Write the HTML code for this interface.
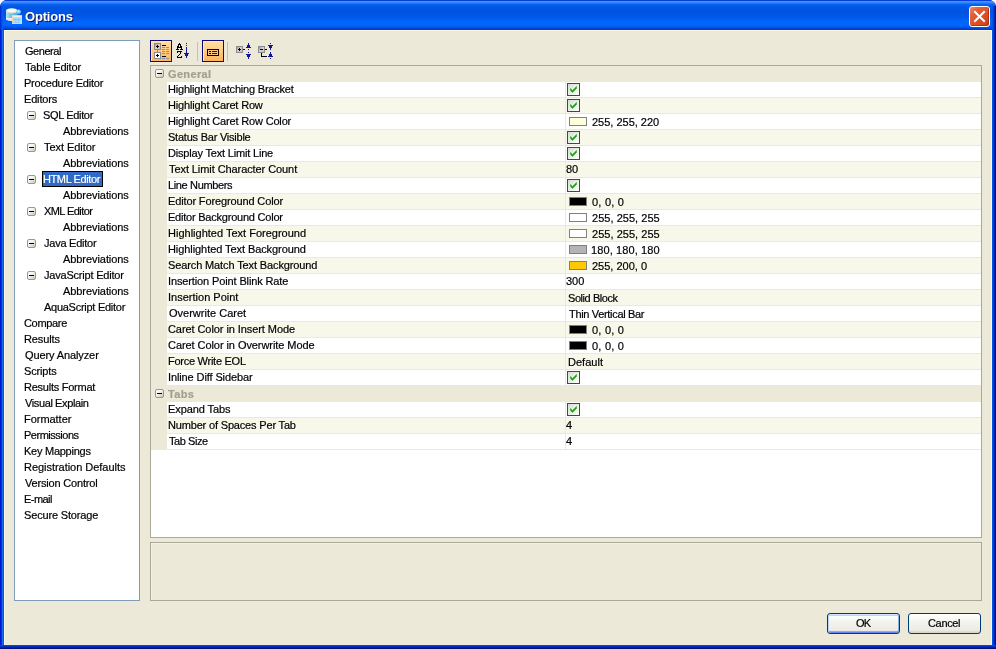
<!DOCTYPE html><html><head><meta charset="utf-8"><title>Options</title><style>
*{margin:0;padding:0;box-sizing:border-box}
html,body{width:996px;height:649px;overflow:hidden;background:#fff}
body{position:relative;font-family:'Liberation Sans', sans-serif;font-size:11px;color:#000}
.a{position:absolute}
.t{position:absolute;line-height:16px;white-space:nowrap;letter-spacing:-0.2px;will-change:transform;-webkit-text-stroke:0.2px currentColor}
.exp{position:absolute;width:9px;height:9px;border:1px solid #7F9DB9;border-radius:2px;background:linear-gradient(135deg,#fff 0%,#F4F2EA 45%,#C9C2AE 100%)}
.exp i{position:absolute;left:1px;top:3px;width:5px;height:1px;background:#000}
.cb{position:absolute;width:13px;height:13px;border:1px solid #1C5180;background:linear-gradient(135deg,#DCDCD7 0%,#F0F0EA 60%,#fff 100%)}
.cb svg{position:absolute;left:0;top:0}
.sw{position:absolute;width:18px;height:9px;border:1px solid #808080}
</style></head><body>
<div class="a" id="frame" style="left:0;top:0;width:996px;height:649px;background:#0831D9;border-radius:7px 7px 0 0"></div>
<div class="a" style="left:0;top:0;width:996px;height:30px;border-radius:7px 7px 0 0;background:linear-gradient(to bottom,#0A3ED8 0px,#0A3ED8 1px,#3D93FF 1px,#3D93FF 2px,#3389FF 2px,#3389FF 3px,#1874F8 3px,#1874F8 4px,#0A65F0 4px,#0A65F0 5px,#035CEA 5px,#035CEA 6px,#0058E7 6px,#0058E7 7px,#0056E5 7px,#0056E5 8px,#0055E4 8px,#0055E4 9px,#0054E3 9px,#0054E3 10px,#0054E3 10px,#0054E3 11px,#0054E3 11px,#0054E3 12px,#0054E3 12px,#0054E3 13px,#0054E3 13px,#0054E3 14px,#0055E5 14px,#0055E5 15px,#0056E7 15px,#0056E7 16px,#0058EA 16px,#0058EA 17px,#005AED 17px,#005AED 18px,#005DF0 18px,#005DF0 19px,#0060F4 19px,#0060F4 20px,#0063F7 20px,#0063F7 21px,#0065FA 21px,#0065FA 22px,#0066FC 22px,#0066FC 23px,#0066FD 23px,#0066FD 24px,#0066FE 24px,#0066FE 25px,#0064FA 25px,#0064FA 26px,#005CF0 26px,#005CF0 27px,#0052E4 27px,#0052E4 28px,#0046DA 28px,#0046DA 29px,#003ACC 29px,#003ACC 30px)"></div>
<div class="a" style="left:0;top:6px;width:3px;height:24px;background:linear-gradient(to right,#0030D4 0,#0030D4 1px,#0848E6 1px,#0848E6 2px,#0A58F0 2px)"></div>
<div class="a" style="left:992px;top:6px;width:4px;height:24px;background:linear-gradient(to right,#0050EC 0,#0050EC 1px,#0040D4 1px,#0040D4 2px,#0028B0 2px,#0028B0 3px,#001890 3px)"></div>
<div class="a" style="left:0;top:30px;width:4px;height:619px;background:linear-gradient(to right,#0019CF 0,#0019CF 1px,#0035E0 1px,#0035E0 2px,#166CF0 2px,#166CF0 3px,#0852E6 3px)"></div>
<div class="a" style="left:992px;top:30px;width:4px;height:619px;background:linear-gradient(to right,#0050F0 0,#0050F0 1px,#0040D8 1px,#0040D8 2px,#0022A8 2px,#0022A8 3px,#001284 3px)"></div>
<div class="a" style="left:0;top:645px;width:996px;height:4px;background:linear-gradient(to bottom,#0048E0 0,#0048E0 1px,#0030C0 1px,#0030C0 2px,#0020A0 2px,#0020A0 3px,#001080 3px)"></div>
<div class="a" style="left:4px;top:30px;width:988px;height:615px;background:#ECE9D8;border-top:1px solid #FFF8E4;border-left:1px solid #FFF8E4;border-right:1px solid #FFF8E4"></div>
<svg class="a" style="left:4px;top:6px" width="20" height="20" viewBox="0 0 20 20">
<defs><linearGradient id="cyl" x1="0" x2="1"><stop offset="0" stop-color="#B8E4FA"/><stop offset="0.4" stop-color="#6CC8F2"/><stop offset="1" stop-color="#48B0E8"/></linearGradient>
<radialGradient id="ball" cx="0.4" cy="0.35" r="0.7"><stop offset="0" stop-color="#D8F2FF"/><stop offset="0.6" stop-color="#70BEEE"/><stop offset="1" stop-color="#3A8ED8"/></radialGradient></defs>
<path d="M2 4.5 Q7.8 1.5 13.6 4.5 L13.6 13.5 Q7.8 16 2 13.5 Z" fill="url(#cyl)"/>
<path d="M2 12 L13.6 12 L13.6 13.8 Q7.8 16.2 2 13.8 Z" fill="#F2EADC"/>
<ellipse cx="7.8" cy="4.6" rx="5.8" ry="2.4" fill="#FBF8F2"/>
<path d="M2 4.6 Q7.8 8.6 13.6 4.6 L13.6 5.8 Q7.8 9.2 2 5.8 Z" fill="#E8DCC8"/>
<circle cx="14.7" cy="6" r="2.4" fill="url(#ball)"/>
<rect x="8" y="9" width="10" height="9" fill="#E4D8C0"/>
<rect x="9" y="10" width="8" height="7" fill="#A4DAF6"/>
<rect x="9" y="10" width="8" height="1.3" fill="#F4F0E8"/>
<path d="M9 13.5 H17 M11.8 11.3 V17 M14.5 11.3 V17" stroke="#7CC0EC" stroke-width="0.7"/>
<path d="M9.2 12.2 H17 M9.2 15.2 H17" stroke="#C4ECFF" stroke-width="0.6"/>
</svg>
<div class="a" style="left:25px;top:7px;font:bold 13px 'Liberation Sans', sans-serif;color:#fff;line-height:20px;text-shadow:1px 1px 0 #0A1864;letter-spacing:-0.2px;will-change:transform">Options</div>
<div class="a" style="left:969px;top:6px;width:21px;height:21px;border:1px solid #fff;border-radius:3px;background:linear-gradient(135deg,#EE8A68 0%,#E4603A 25%,#DE5226 55%,#D44418 85%,#C43A10 100%);box-shadow:inset -1px -1px 0 #B8300C">
<svg class="a" style="left:0;top:0" width="19" height="19" viewBox="0 0 19 19"><path d="M5 5 L14 14 M14 5 L5 14" stroke="#fff" stroke-width="2" stroke-linecap="square"/></svg></div>
<div class="a" style="left:14px;top:40px;width:126px;height:561px;background:#fff;border:1px solid #7F9DB9"></div>
<div class="t" style="left:25px;top:43px;letter-spacing:-0.45px">General</div>
<div class="t" style="left:25px;top:59px;letter-spacing:-0.182px">Table Editor</div>
<div class="t" style="left:24px;top:75px;letter-spacing:-0.213px">Procedure Editor</div>
<div class="t" style="left:24px;top:91px;letter-spacing:-0.167px">Editors</div>
<div class="exp" style="left:27px;top:111px"><i></i></div>
<div class="t" style="left:43px;top:107px;letter-spacing:-0.344px">SQL Editor</div>
<div class="t" style="left:63px;top:123px;letter-spacing:-0.067px">Abbreviations</div>
<div class="exp" style="left:27px;top:143px"><i></i></div>
<div class="t" style="left:44px;top:139px;letter-spacing:-0.06px">Text Editor</div>
<div class="t" style="left:63px;top:155px;letter-spacing:-0.067px">Abbreviations</div>
<div class="exp" style="left:27px;top:175px"><i></i></div>
<div class="a" style="left:42px;top:171px;width:61px;height:16px;background:#316AC5;border:1px solid #000"></div>
<div class="t" style="left:43px;top:171px;color:#fff;letter-spacing:-0.4px">HTML Editor</div>
<div class="t" style="left:63px;top:187px;letter-spacing:-0.067px">Abbreviations</div>
<div class="exp" style="left:27px;top:207px"><i></i></div>
<div class="t" style="left:44px;top:203px;letter-spacing:-0.567px">XML Editor</div>
<div class="t" style="left:63px;top:219px;letter-spacing:-0.067px">Abbreviations</div>
<div class="exp" style="left:27px;top:239px"><i></i></div>
<div class="t" style="left:44px;top:235px;letter-spacing:-0.24px">Java Editor</div>
<div class="t" style="left:63px;top:251px;letter-spacing:-0.067px">Abbreviations</div>
<div class="exp" style="left:27px;top:271px"><i></i></div>
<div class="t" style="left:44px;top:267px;letter-spacing:-0.206px">JavaScript Editor</div>
<div class="t" style="left:63px;top:283px;letter-spacing:-0.067px">Abbreviations</div>
<div class="t" style="left:44px;top:299px;letter-spacing:-0.269px">AquaScript Editor</div>
<div class="t" style="left:24px;top:315px;letter-spacing:-0.333px">Compare</div>
<div class="t" style="left:24px;top:331px;letter-spacing:-0.133px">Results</div>
<div class="t" style="left:25px;top:347px;letter-spacing:-0.108px">Query Analyzer</div>
<div class="t" style="left:24px;top:363px;letter-spacing:-0.15px">Scripts</div>
<div class="t" style="left:24px;top:379px;letter-spacing:-0.246px">Results Format</div>
<div class="t" style="left:25px;top:395px;letter-spacing:-0.385px">Visual Explain</div>
<div class="t" style="left:24px;top:411px;letter-spacing:-0.037px">Formatter</div>
<div class="t" style="left:24px;top:427px;letter-spacing:-0.49px">Permissions</div>
<div class="t" style="left:24px;top:443px;letter-spacing:-0.255px">Key Mappings</div>
<div class="t" style="left:24px;top:459px;letter-spacing:-0.035px">Registration Defaults</div>
<div class="t" style="left:25px;top:475px;letter-spacing:-0.186px">Version Control</div>
<div class="t" style="left:24px;top:491px;letter-spacing:-0.54px">E-mail</div>
<div class="t" style="left:24px;top:507px;letter-spacing:-0.162px">Secure Storage</div>
<div class="a" style="left:150px;top:40px;width:22px;height:22px;border:1px solid #0A0A7E;background:linear-gradient(to bottom,#FFDFA4 0%,#FFCB80 50%,#FFB45A 100%);box-shadow:inset 1px 1px 0 #FFE9BC"></div>
<div class="a" style="left:202px;top:40px;width:22px;height:22px;border:1px solid #0A0A7E;background:linear-gradient(to bottom,#FFDFA4 0%,#FFCB80 50%,#FFB45A 100%);box-shadow:inset 1px 1px 0 #FFE9BC"></div>
<div class="a" style="left:197px;top:42px;width:1px;height:19px;background:#C5C2B2"></div>
<div class="a" style="left:227px;top:42px;width:1px;height:19px;background:#C5C2B2"></div>
<svg class="a" style="left:0;top:0" width="300" height="70" shape-rendering="crispEdges"><defs><linearGradient id="gb" x1="0" y1="0" x2="1" y2="1"><stop offset="0" stop-color="#9C9C9C"/><stop offset="0.5" stop-color="#D4D4D4"/><stop offset="1" stop-color="#C0C0C0"/></linearGradient></defs><rect x="154" y="43" width="7" height="7" fill="#8C8C8C"/><rect x="155" y="44" width="5" height="5" fill="url(#gb)"/><rect x="157" y="45" width="1" height="1" fill="#000"/><rect x="156" y="46" width="3" height="1" fill="#000"/><rect x="157" y="47" width="1" height="1" fill="#000"/><rect x="157" y="50" width="1" height="2" fill="#8C8C8C"/><rect x="154" y="52" width="7" height="7" fill="#8C8C8C"/><rect x="155" y="53" width="5" height="5" fill="#fff"/><rect x="157" y="54" width="1" height="1" fill="#000"/><rect x="156" y="55" width="3" height="1" fill="#000"/><rect x="157" y="56" width="1" height="1" fill="#000"/><rect x="162" y="45" width="4" height="1" fill="#000"/><rect x="162" y="56" width="4" height="1" fill="#000"/><rect x="162" y="47" width="3" height="1" fill="#8A93A8"/><rect x="166" y="47" width="3" height="1" fill="#8A93A8"/><rect x="162" y="49" width="3" height="1" fill="#8A93A8"/><rect x="166" y="49" width="3" height="1" fill="#8A93A8"/><rect x="162" y="51" width="3" height="1" fill="#8A93A8"/><rect x="166" y="51" width="3" height="1" fill="#8A93A8"/><rect x="162" y="53" width="3" height="1" fill="#8A93A8"/><rect x="166" y="53" width="3" height="1" fill="#8A93A8"/><rect x="162" y="58" width="3" height="1" fill="#8A93A8"/><rect x="166" y="58" width="3" height="1" fill="#8A93A8"/><rect x="179" y="43" width="1" height="1" fill="#000"/><rect x="178" y="44" width="3" height="1" fill="#000"/><rect x="178" y="45" width="1" height="1" fill="#000"/><rect x="180" y="45" width="1" height="1" fill="#000"/><rect x="177" y="46" width="2" height="1" fill="#000"/><rect x="180" y="46" width="2" height="1" fill="#000"/><rect x="177" y="47" width="5" height="1" fill="#000"/><rect x="177" y="48" width="1" height="1" fill="#000"/><rect x="181" y="48" width="1" height="1" fill="#000"/><rect x="176" y="49" width="3" height="1" fill="#000"/><rect x="180" y="49" width="3" height="1" fill="#000"/><rect x="177" y="51" width="5" height="1" fill="#000"/><rect x="177" y="52" width="1" height="1" fill="#000"/><rect x="180" y="52" width="1" height="1" fill="#000"/><rect x="180" y="53" width="1" height="1" fill="#000"/><rect x="179" y="54" width="1" height="1" fill="#000"/><rect x="178" y="55" width="1" height="1" fill="#000"/><rect x="177" y="56" width="1" height="1" fill="#000"/><rect x="181" y="56" width="1" height="1" fill="#000"/><rect x="177" y="57" width="5" height="1" fill="#000"/><rect x="186" y="43" width="1" height="1" fill="#14149A"/><rect x="186" y="45" width="1" height="1" fill="#14149A"/><rect x="186" y="47" width="1" height="1" fill="#14149A"/><rect x="186" y="48" width="1" height="1" fill="#14149A"/><rect x="186" y="49" width="1" height="1" fill="#14149A"/><rect x="186" y="50" width="1" height="1" fill="#14149A"/><rect x="186" y="51" width="1" height="1" fill="#14149A"/><rect x="186" y="52" width="1" height="1" fill="#14149A"/><rect x="184" y="53" width="5" height="1" fill="#14149A"/><rect x="185" y="54" width="3" height="1" fill="#14149A"/><rect x="185" y="55" width="3" height="1" fill="#14149A"/><rect x="186" y="56" width="1" height="1" fill="#14149A"/><rect x="186" y="57" width="1" height="1" fill="#14149A"/><rect x="207" y="49" width="12" height="7" fill="#000"/><rect x="208" y="50" width="10" height="5" fill="#FFC577"/><rect x="209" y="51" width="2" height="1" fill="#000"/><rect x="209" y="53" width="2" height="1" fill="#000"/><rect x="212" y="51" width="5" height="1" fill="#14149A"/><rect x="212" y="53" width="5" height="1" fill="#14149A"/><rect x="236" y="46" width="7" height="7" fill="#8C8C8C"/><rect x="237" y="47" width="5" height="5" fill="url(#gb)"/><rect x="239" y="48" width="1" height="1" fill="#000"/><rect x="238" y="49" width="3" height="1" fill="#000"/><rect x="239" y="50" width="1" height="1" fill="#000"/><rect x="243" y="49" width="2" height="1" fill="#000"/><rect x="248" y="43" width="1" height="1" fill="#14149A"/><rect x="248" y="44" width="1" height="1" fill="#14149A"/><rect x="247" y="45" width="3" height="1" fill="#14149A"/><rect x="247" y="46" width="3" height="1" fill="#14149A"/><rect x="246" y="47" width="5" height="1" fill="#14149A"/><rect x="248" y="49" width="1" height="1" fill="#14149A"/><rect x="248" y="52" width="1" height="1" fill="#14149A"/><rect x="246" y="54" width="5" height="1" fill="#14149A"/><rect x="247" y="55" width="3" height="1" fill="#14149A"/><rect x="247" y="56" width="3" height="1" fill="#14149A"/><rect x="248" y="57" width="1" height="1" fill="#14149A"/><rect x="248" y="58" width="1" height="1" fill="#14149A"/><rect x="258" y="46" width="7" height="7" fill="#8C8C8C"/><rect x="259" y="47" width="5" height="5" fill="url(#gb)"/><rect x="260" y="49" width="3" height="1" fill="#000"/><rect x="265" y="49" width="2" height="1" fill="#000"/><rect x="261" y="53" width="1" height="4" fill="#000"/><rect x="261" y="56" width="6" height="1" fill="#000"/><rect x="270" y="43" width="1" height="1" fill="#14149A"/><rect x="268" y="45" width="5" height="1" fill="#14149A"/><rect x="269" y="46" width="3" height="1" fill="#14149A"/><rect x="269" y="47" width="3" height="1" fill="#14149A"/><rect x="270" y="48" width="1" height="1" fill="#14149A"/><rect x="270" y="49" width="1" height="1" fill="#14149A"/><rect x="270" y="52" width="1" height="1" fill="#14149A"/><rect x="270" y="53" width="1" height="1" fill="#14149A"/><rect x="269" y="54" width="3" height="1" fill="#14149A"/><rect x="269" y="55" width="3" height="1" fill="#14149A"/><rect x="268" y="56" width="5" height="1" fill="#14149A"/><rect x="270" y="58" width="1" height="1" fill="#14149A"/></svg>
<div class="a" style="left:150px;top:65px;width:832px;height:473px;background:#fff;border:1px solid #ACA899"></div>
<div class="a" style="left:151px;top:66px;width:830px;height:16px;background:#ECE9D8"></div>
<div class="exp" style="left:155px;top:69px"><i></i></div>
<div class="t" style="left:168px;top:66px;font-weight:bold;color:#A29F8F;letter-spacing:0.35px">General</div>
<div class="a" style="left:151px;top:82px;width:16px;height:16px;background:#ECE9D8"></div>
<div class="a" style="left:167px;top:82px;width:814px;height:16px;background:#FFFFFF;border-bottom:1px solid #ECE9DA"></div>
<div class="a" style="left:565px;top:82px;width:1px;height:16px;background:#ECE9DA"></div>
<div class="t" style="left:168px;top:81px;letter-spacing:-0.2px">Highlight Matching Bracket</div>
<div class="cb" style="left:567px;top:83px"><svg width="11" height="11" viewBox="0 0 11 11"><path d="M2.5 4.5 L4.5 6.5 L8.5 2.5 L8.5 4.5 L4.5 8.5 L2.5 6.5 Z" fill="#21A121" stroke="#21A121" stroke-width="0.6"/></svg></div>
<div class="a" style="left:151px;top:98px;width:16px;height:16px;background:#ECE9D8"></div>
<div class="a" style="left:167px;top:98px;width:814px;height:16px;background:#F8F8EA;border-bottom:1px solid #ECE9DA"></div>
<div class="a" style="left:565px;top:98px;width:1px;height:16px;background:#ECE9DA"></div>
<div class="t" style="left:168px;top:97px;letter-spacing:-0.167px">Highlight Caret Row</div>
<div class="cb" style="left:567px;top:99px"><svg width="11" height="11" viewBox="0 0 11 11"><path d="M2.5 4.5 L4.5 6.5 L8.5 2.5 L8.5 4.5 L4.5 8.5 L2.5 6.5 Z" fill="#21A121" stroke="#21A121" stroke-width="0.6"/></svg></div>
<div class="a" style="left:151px;top:114px;width:16px;height:16px;background:#ECE9D8"></div>
<div class="a" style="left:167px;top:114px;width:814px;height:16px;background:#FFFFFF;border-bottom:1px solid #ECE9DA"></div>
<div class="a" style="left:565px;top:114px;width:1px;height:16px;background:#ECE9DA"></div>
<div class="t" style="left:168px;top:113px;letter-spacing:-0.162px">Highlight Caret Row Color</div>
<div class="sw" style="left:569px;top:117px;background:#FFFFDC"></div>
<div class="t" style="left:592px;top:114px;letter-spacing:-0.008px">255, 255, 220</div>
<div class="a" style="left:151px;top:130px;width:16px;height:16px;background:#ECE9D8"></div>
<div class="a" style="left:167px;top:130px;width:814px;height:16px;background:#F8F8EA;border-bottom:1px solid #ECE9DA"></div>
<div class="a" style="left:565px;top:130px;width:1px;height:16px;background:#ECE9DA"></div>
<div class="t" style="left:168px;top:129px;letter-spacing:-0.229px">Status Bar Visible</div>
<div class="cb" style="left:567px;top:131px"><svg width="11" height="11" viewBox="0 0 11 11"><path d="M2.5 4.5 L4.5 6.5 L8.5 2.5 L8.5 4.5 L4.5 8.5 L2.5 6.5 Z" fill="#21A121" stroke="#21A121" stroke-width="0.6"/></svg></div>
<div class="a" style="left:151px;top:146px;width:16px;height:16px;background:#ECE9D8"></div>
<div class="a" style="left:167px;top:146px;width:814px;height:16px;background:#FFFFFF;border-bottom:1px solid #ECE9DA"></div>
<div class="a" style="left:565px;top:146px;width:1px;height:16px;background:#ECE9DA"></div>
<div class="t" style="left:168px;top:145px;letter-spacing:-0.182px">Display Text Limit Line</div>
<div class="cb" style="left:567px;top:147px"><svg width="11" height="11" viewBox="0 0 11 11"><path d="M2.5 4.5 L4.5 6.5 L8.5 2.5 L8.5 4.5 L4.5 8.5 L2.5 6.5 Z" fill="#21A121" stroke="#21A121" stroke-width="0.6"/></svg></div>
<div class="a" style="left:151px;top:162px;width:16px;height:16px;background:#ECE9D8"></div>
<div class="a" style="left:167px;top:162px;width:814px;height:16px;background:#F8F8EA;border-bottom:1px solid #ECE9DA"></div>
<div class="a" style="left:565px;top:162px;width:1px;height:16px;background:#ECE9DA"></div>
<div class="t" style="left:169px;top:161px;letter-spacing:-0.08px">Text Limit Character Count</div>
<div class="t" style="left:566px;top:161px;letter-spacing:0">80</div>
<div class="a" style="left:151px;top:178px;width:16px;height:16px;background:#ECE9D8"></div>
<div class="a" style="left:167px;top:178px;width:814px;height:16px;background:#FFFFFF;border-bottom:1px solid #ECE9DA"></div>
<div class="a" style="left:565px;top:178px;width:1px;height:16px;background:#ECE9DA"></div>
<div class="t" style="left:168px;top:177px;letter-spacing:-0.355px">Line Numbers</div>
<div class="cb" style="left:567px;top:179px"><svg width="11" height="11" viewBox="0 0 11 11"><path d="M2.5 4.5 L4.5 6.5 L8.5 2.5 L8.5 4.5 L4.5 8.5 L2.5 6.5 Z" fill="#21A121" stroke="#21A121" stroke-width="0.6"/></svg></div>
<div class="a" style="left:151px;top:194px;width:16px;height:16px;background:#ECE9D8"></div>
<div class="a" style="left:167px;top:194px;width:814px;height:16px;background:#F8F8EA;border-bottom:1px solid #ECE9DA"></div>
<div class="a" style="left:565px;top:194px;width:1px;height:16px;background:#ECE9DA"></div>
<div class="t" style="left:168px;top:193px;letter-spacing:-0.132px">Editor Foreground Color</div>
<div class="sw" style="left:569px;top:197px;background:#000000"></div>
<div class="t" style="left:592px;top:194px;letter-spacing:0.217px">0, 0, 0</div>
<div class="a" style="left:151px;top:210px;width:16px;height:16px;background:#ECE9D8"></div>
<div class="a" style="left:167px;top:210px;width:814px;height:16px;background:#FFFFFF;border-bottom:1px solid #ECE9DA"></div>
<div class="a" style="left:565px;top:210px;width:1px;height:16px;background:#ECE9DA"></div>
<div class="t" style="left:168px;top:209px;letter-spacing:-0.223px">Editor Background Color</div>
<div class="sw" style="left:569px;top:213px;background:#FFFFFF"></div>
<div class="t" style="left:592px;top:210px;letter-spacing:0.033px">255, 255, 255</div>
<div class="a" style="left:151px;top:226px;width:16px;height:16px;background:#ECE9D8"></div>
<div class="a" style="left:167px;top:226px;width:814px;height:16px;background:#F8F8EA;border-bottom:1px solid #ECE9DA"></div>
<div class="a" style="left:565px;top:226px;width:1px;height:16px;background:#ECE9DA"></div>
<div class="t" style="left:168px;top:225px;letter-spacing:0.004px">Highlighted Text Foreground</div>
<div class="sw" style="left:569px;top:229px;background:#FFFFFF"></div>
<div class="t" style="left:592px;top:226px;letter-spacing:0.033px">255, 255, 255</div>
<div class="a" style="left:151px;top:242px;width:16px;height:16px;background:#ECE9D8"></div>
<div class="a" style="left:167px;top:242px;width:814px;height:16px;background:#FFFFFF;border-bottom:1px solid #ECE9DA"></div>
<div class="a" style="left:565px;top:242px;width:1px;height:16px;background:#ECE9DA"></div>
<div class="t" style="left:168px;top:241px;letter-spacing:-0.073px">Highlighted Text Background</div>
<div class="sw" style="left:569px;top:245px;background:#B4B4B4"></div>
<div class="t" style="left:591px;top:242px;letter-spacing:0.117px">180, 180, 180</div>
<div class="a" style="left:151px;top:258px;width:16px;height:16px;background:#ECE9D8"></div>
<div class="a" style="left:167px;top:258px;width:814px;height:16px;background:#F8F8EA;border-bottom:1px solid #ECE9DA"></div>
<div class="a" style="left:565px;top:258px;width:1px;height:16px;background:#ECE9DA"></div>
<div class="t" style="left:168px;top:257px;letter-spacing:-0.119px">Search Match Text Background</div>
<div class="sw" style="left:569px;top:261px;background:#FFC800"></div>
<div class="t" style="left:592px;top:258px;letter-spacing:0.0px">255, 200, 0</div>
<div class="a" style="left:151px;top:274px;width:16px;height:16px;background:#ECE9D8"></div>
<div class="a" style="left:167px;top:274px;width:814px;height:16px;background:#FFFFFF;border-bottom:1px solid #ECE9DA"></div>
<div class="a" style="left:565px;top:274px;width:1px;height:16px;background:#ECE9DA"></div>
<div class="t" style="left:168px;top:273px;letter-spacing:-0.124px">Insertion Point Blink Rate</div>
<div class="t" style="left:566px;top:273px;letter-spacing:0">300</div>
<div class="a" style="left:151px;top:290px;width:16px;height:16px;background:#ECE9D8"></div>
<div class="a" style="left:167px;top:290px;width:814px;height:16px;background:#F8F8EA;border-bottom:1px solid #ECE9DA"></div>
<div class="a" style="left:565px;top:290px;width:1px;height:16px;background:#ECE9DA"></div>
<div class="t" style="left:168px;top:289px;letter-spacing:0.007px">Insertion Point</div>
<div class="t" style="left:568px;top:290px;letter-spacing:-0.43px">Solid Block</div>
<div class="a" style="left:151px;top:306px;width:16px;height:16px;background:#ECE9D8"></div>
<div class="a" style="left:167px;top:306px;width:814px;height:16px;background:#FFFFFF;border-bottom:1px solid #ECE9DA"></div>
<div class="a" style="left:565px;top:306px;width:1px;height:16px;background:#ECE9DA"></div>
<div class="t" style="left:169px;top:305px;letter-spacing:0.007px">Overwrite Caret</div>
<div class="t" style="left:569px;top:306px;letter-spacing:-0.325px">Thin Vertical Bar</div>
<div class="a" style="left:151px;top:322px;width:16px;height:16px;background:#ECE9D8"></div>
<div class="a" style="left:167px;top:322px;width:814px;height:16px;background:#F8F8EA;border-bottom:1px solid #ECE9DA"></div>
<div class="a" style="left:565px;top:322px;width:1px;height:16px;background:#ECE9DA"></div>
<div class="t" style="left:168px;top:321px;letter-spacing:-0.076px">Caret Color in Insert Mode</div>
<div class="sw" style="left:569px;top:325px;background:#000000"></div>
<div class="t" style="left:592px;top:322px;letter-spacing:0.217px">0, 0, 0</div>
<div class="a" style="left:151px;top:338px;width:16px;height:16px;background:#ECE9D8"></div>
<div class="a" style="left:167px;top:338px;width:814px;height:16px;background:#FFFFFF;border-bottom:1px solid #ECE9DA"></div>
<div class="a" style="left:565px;top:338px;width:1px;height:16px;background:#ECE9DA"></div>
<div class="t" style="left:168px;top:337px;letter-spacing:-0.068px">Caret Color in Overwrite Mode</div>
<div class="sw" style="left:569px;top:341px;background:#000000"></div>
<div class="t" style="left:592px;top:338px;letter-spacing:0.217px">0, 0, 0</div>
<div class="a" style="left:151px;top:354px;width:16px;height:16px;background:#ECE9D8"></div>
<div class="a" style="left:167px;top:354px;width:814px;height:16px;background:#F8F8EA;border-bottom:1px solid #ECE9DA"></div>
<div class="a" style="left:565px;top:354px;width:1px;height:16px;background:#ECE9DA"></div>
<div class="t" style="left:168px;top:353px;letter-spacing:-0.264px">Force Write EOL</div>
<div class="t" style="left:568px;top:354px;letter-spacing:0.017px">Default</div>
<div class="a" style="left:151px;top:370px;width:16px;height:16px;background:#ECE9D8"></div>
<div class="a" style="left:167px;top:370px;width:814px;height:16px;background:#FFFFFF;border-bottom:1px solid #ECE9DA"></div>
<div class="a" style="left:565px;top:370px;width:1px;height:16px;background:#ECE9DA"></div>
<div class="t" style="left:168px;top:369px;letter-spacing:-0.111px">Inline Diff Sidebar</div>
<div class="cb" style="left:567px;top:371px"><svg width="11" height="11" viewBox="0 0 11 11"><path d="M2.5 4.5 L4.5 6.5 L8.5 2.5 L8.5 4.5 L4.5 8.5 L2.5 6.5 Z" fill="#21A121" stroke="#21A121" stroke-width="0.6"/></svg></div>
<div class="a" style="left:151px;top:386px;width:830px;height:16px;background:#ECE9D8"></div>
<div class="exp" style="left:155px;top:389px"><i></i></div>
<div class="t" style="left:168px;top:386px;font-weight:bold;color:#A29F8F;letter-spacing:0.35px">Tabs</div>
<div class="a" style="left:151px;top:402px;width:16px;height:16px;background:#ECE9D8"></div>
<div class="a" style="left:167px;top:402px;width:814px;height:16px;background:#FFFFFF;border-bottom:1px solid #ECE9DA"></div>
<div class="a" style="left:565px;top:402px;width:1px;height:16px;background:#ECE9DA"></div>
<div class="t" style="left:168px;top:401px;letter-spacing:-0.09px">Expand Tabs</div>
<div class="cb" style="left:567px;top:403px"><svg width="11" height="11" viewBox="0 0 11 11"><path d="M2.5 4.5 L4.5 6.5 L8.5 2.5 L8.5 4.5 L4.5 8.5 L2.5 6.5 Z" fill="#21A121" stroke="#21A121" stroke-width="0.6"/></svg></div>
<div class="a" style="left:151px;top:418px;width:16px;height:16px;background:#ECE9D8"></div>
<div class="a" style="left:167px;top:418px;width:814px;height:16px;background:#F8F8EA;border-bottom:1px solid #ECE9DA"></div>
<div class="a" style="left:565px;top:418px;width:1px;height:16px;background:#ECE9DA"></div>
<div class="t" style="left:168px;top:417px;letter-spacing:-0.17px">Number of Spaces Per Tab</div>
<div class="t" style="left:566px;top:417px;letter-spacing:0">4</div>
<div class="a" style="left:151px;top:434px;width:16px;height:16px;background:#ECE9D8"></div>
<div class="a" style="left:167px;top:434px;width:814px;height:16px;background:#FFFFFF;border-bottom:1px solid #ECE9DA"></div>
<div class="a" style="left:565px;top:434px;width:1px;height:16px;background:#ECE9DA"></div>
<div class="t" style="left:169px;top:433px;letter-spacing:-0.429px">Tab Size</div>
<div class="t" style="left:566px;top:433px;letter-spacing:0">4</div>
<div class="a" style="left:150px;top:542px;width:832px;height:59px;background:#ECE9D8;border:1px solid #ACA899;box-shadow:inset 1px 1px 0 #F3F1E6"></div>
<div class="a" style="left:827px;top:613px;width:73px;height:21px;border:1px solid #003C74;border-radius:3px;background:linear-gradient(to bottom,#FFFFFF 0%,#F4F4EF 40%,#ECEBE4 85%,#D6D0C5 100%);box-shadow:inset 0 1px 0 #CEE7FF,inset 1px 0 0 #BCD4F6,inset -1px 0 0 #89ADE4,inset 0 -1px 0 #6982EE,inset 0 2px 0 #BCD4F6,inset 0 -2px 0 #89ADE4;"></div>
<div class="t" style="left:856px;top:615px;letter-spacing:-0.8px">OK</div>
<div class="a" style="left:908px;top:613px;width:73px;height:21px;border:1px solid #003C74;border-radius:3px;background:linear-gradient(to bottom,#FFFFFF 0%,#F4F4EF 40%,#ECEBE4 85%,#D6D0C5 100%);"></div>
<div class="t" style="left:928px;top:615px;letter-spacing:-0.34px">Cancel</div>
</body></html>
